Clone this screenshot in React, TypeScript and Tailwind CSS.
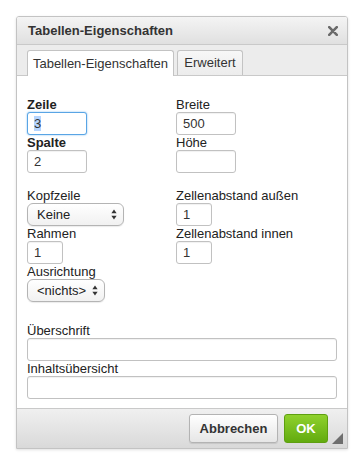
const font = { fontFamily: '"Liberation Sans", Arial, Helvetica, sans-serif' };

const Label = ({ children, bold }: { children: React.ReactNode; bold?: boolean }) => (
  <div className={`h-[15px] text-[13px] leading-[15px] text-[#222] ${bold ? "font-bold" : ""}`}>{children}</div>
);

const TextBox = ({ value, width, focused, selected }: { value?: string; width: string; focused?: boolean; selected?: boolean }) => (
  <div
    className={`h-[23px] ${width} rounded-[3px] border bg-white pl-[6px] text-[13px] leading-[21px] text-[#333] ${
      focused ? "border-[#59a5e5] shadow-[0_0_2px_#7db9ee]" : "border-[#c1c1c1] shadow-[inset_0_1px_1px_rgba(0,0,0,0.06)]"
    }`}
  >
    {value && <span className={selected ? "bg-[#b5d5ff]" : ""}>{value}</span>}
  </div>
);

const Select = ({ value, width }: { value: string; width: string }) => (
  <div
    className={`flex h-[23px] ${width} items-center justify-between rounded-[6px] border border-[#b4b4b4] bg-gradient-to-b from-white to-[#f1f1f1] pl-[9px] pr-[6px] text-[13px] text-[#222] shadow-[0_1px_1px_rgba(0,0,0,0.08)]`}
  >
    <span>{value}</span>
    <svg width="6" height="11" viewBox="0 0 6 11">
      <path d="M3 0.5 L5.6 4.3 H0.4 Z" fill="#333" />
      <path d="M3 10.5 L5.6 6.7 H0.4 Z" fill="#333" />
    </svg>
  </div>
);

export default function App() {
  return (
    <div className="min-h-[464px] bg-white pl-[16px] pt-[16px]" style={font}>
      <div className="w-[332px] overflow-hidden rounded-t-[3px] border border-[#c3c3c3] shadow-[0_1px_3px_rgba(0,0,0,0.12)]">
        {/* title bar */}
        <div className="flex h-[28px] items-center justify-between border-b border-[#c9c9c9] bg-gradient-to-b from-[#f4f4f4] to-[#e0e0e0] pl-[11px] pr-[9px]">
          <span className="text-[13px] font-bold text-[#333]">Tabellen-Eigenschaften</span>
          <svg width="10" height="10" viewBox="0 0 10 10">
            <path d="M1.2 1.2 L8.8 8.8 M8.8 1.2 L1.2 8.8" stroke="#6b6b6b" strokeWidth="2.6" strokeLinecap="round" />
          </svg>
        </div>

        {/* tabs */}
        <div className="flex items-end gap-[3px] border-b border-[#c9c9c9] bg-[#ececec] px-[10px] pt-[5px]">
          <div className="-mb-px flex h-[26px] w-[147px] items-center justify-center rounded-t-[3px] border border-b-0 border-[#c3c3c3] bg-white text-[13px] text-[#333]">
            Tabellen-Eigenschaften
          </div>
          <div className="flex h-[25px] w-[66px] items-center justify-center rounded-t-[3px] border border-b-0 border-[#c3c3c3] bg-gradient-to-b from-[#f7f7f7] to-[#ececec] text-[13px] text-[#333]">
            Erweitert
          </div>
        </div>

        {/* panel */}
        <div className="border-b border-[#c9c9c9] bg-white px-[10px] pb-[9px] pt-[21px]">
          <div className="grid grid-cols-[149px_1fr]">
            <div className="flex flex-col">
              <Label bold>Zeile</Label>
              <TextBox value="3" width="w-[60px]" focused selected />
              <Label bold>Spalte</Label>
              <TextBox value="2" width="w-[60px]" />
              <div className="h-[15px]" />
              <Label>Kopfzeile</Label>
              <Select value="Keine" width="w-[97px]" />
              <Label>Rahmen</Label>
              <TextBox value="1" width="w-[36px]" />
              <Label>Ausrichtung</Label>
              <Select value="<nichts>" width="w-[78px]" />
            </div>
            <div className="flex flex-col">
              <Label>Breite</Label>
              <TextBox value="500" width="w-[60px]" />
              <Label>Höhe</Label>
              <TextBox width="w-[60px]" />
              <div className="h-[15px]" />
              <Label>Zellenabstand außen</Label>
              <TextBox value="1" width="w-[36px]" />
              <Label>Zellenabstand innen</Label>
              <TextBox value="1" width="w-[36px]" />
            </div>
          </div>
          <div className="h-[21px]" />
          <Label>Überschrift</Label>
          <TextBox width="w-[310px]" />
          <Label>Inhaltsübersicht</Label>
          <TextBox width="w-[310px]" />
        </div>

        {/* footer */}
        <div className="relative flex h-[39px] items-center justify-end gap-[6px] bg-gradient-to-b from-[#f0f0f0] to-[#d9d9d9] pr-[19px]">
          <button className="h-[29px] w-[89px] rounded-[3px] border border-[#b3b3b3] bg-gradient-to-b from-white to-[#e6e6e6] text-[13px] font-bold text-[#333] shadow-[0_1px_1px_rgba(0,0,0,0.1)]">
            Abbrechen
          </button>
          <button className="h-[29px] w-[44px] rounded-[3px] border border-[#5e9f10] bg-gradient-to-b from-[#8fd12c] to-[#62ab0e] text-[13px] font-bold text-white">
            OK
          </button>
          <svg className="absolute bottom-[4px] right-[4px]" width="11" height="11" viewBox="0 0 11 11">
            <path d="M11 0 V11 H0 Z" fill="#6e6e6e" />
          </svg>
        </div>
      </div>
    </div>
  );
}
